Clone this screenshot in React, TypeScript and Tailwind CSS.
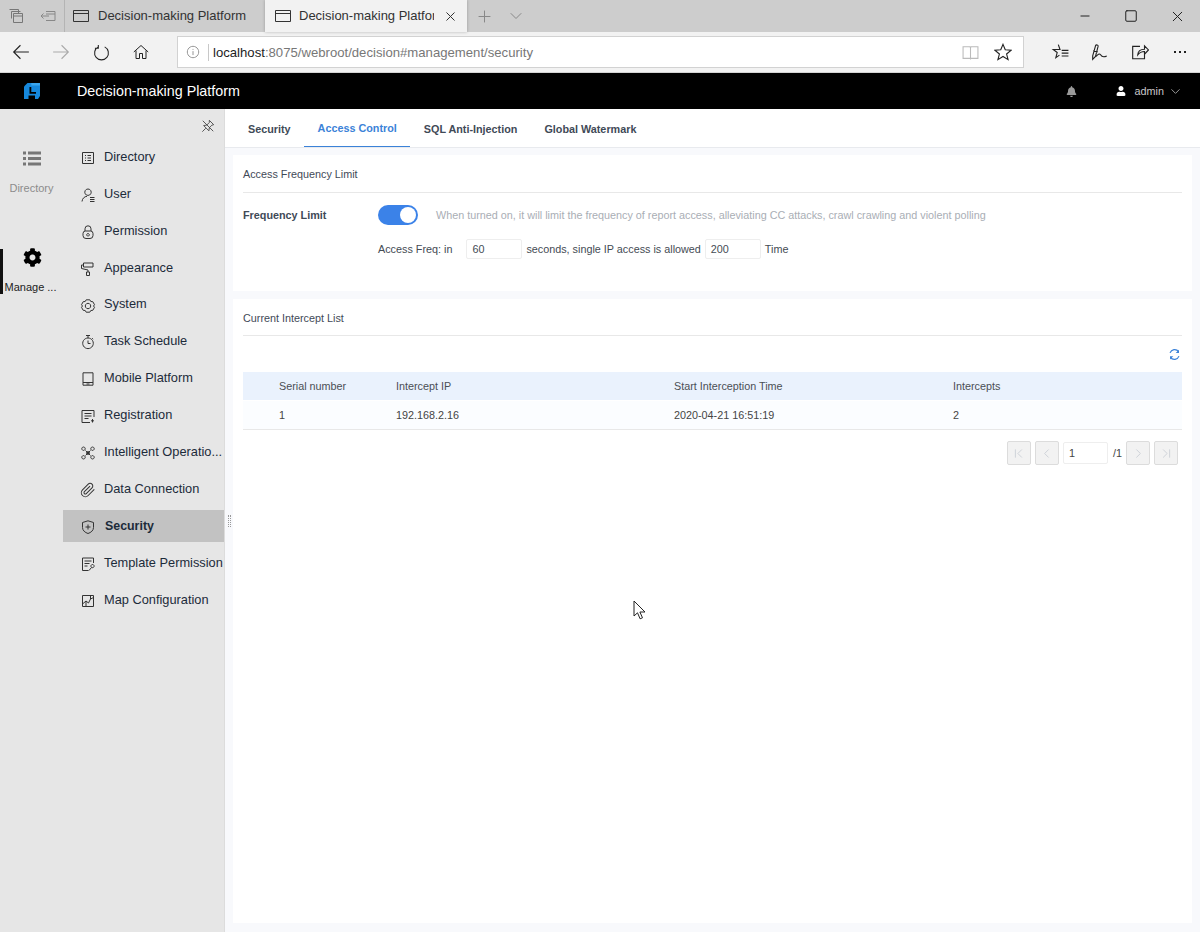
import React from 'react';
import { ChevronFirst, ChevronLast, ChevronLeft, ChevronRight, ChevronDown, Minus, Plus, Square, X } from 'lucide-react';
import { FaBell, FaCog, FaUser } from 'react-icons/fa';

// thin outline icon on a 16 box, used for everything the packages don't have
const Line = ({ size = 16, className = '', children }: { size?: number; className?: string; children: React.ReactNode }) => (
  <svg width={size} height={size} viewBox="0 0 16 16" fill="none" stroke="currentColor" strokeWidth="1" className={`shrink-0 ${className}`}>
    {children}
  </svg>
);

const menuItems: { label: string; icon: React.ReactNode; active?: boolean }[] = [
  {
    label: 'Directory',
    icon: <path d="M2.500 2.500h11v11h-11zM5 5.500h1M7.500 5.500H11M5 8h1M7.500 8H11M5 10.500h1M7.500 10.500H11" />,
  },
  {
    label: 'User',
    icon: <path d="M8 2a3.200 3.200 0 1 1-.01 0M2 14.500c.3-3 2.400-5 5-5.200M10 10.500h4.500M10 12.500h4.500M10 14.500h4.500" />,
  },
  {
    label: 'Permission',
    icon: <path d="M5 7V4.800a3 3 0 0 1 6 0V7M3 9.500A2.500 2.500 0 0 1 5.500 7h5A2.500 2.500 0 0 1 13 9.500v2A3 3 0 0 1 10 14.500H6a3 3 0 0 1-3-3zM8 9.500a1.300 1.300 0 1 0 .01 0" />,
  },
  {
    label: 'Appearance',
    icon: <path d="M3.500 2h9.500v4H3.500zM3.500 4H1.500v3.500l6.500 1.500v2M6.500 11h3v3.500h-3z" />,
  },
  {
    label: 'System',
    icon: <path d="M6.200 1.800h3.600l1 1.700 2 .2 1.700 3-1 1.300 1 1.300-1.700 3-2 .2-1 1.700H6.200l-1-1.700-2-.2L1.500 9.300l1-1.300-1-1.300 1.700-3 2-.2zM8 5.300a2.700 2.700 0 1 0 .01 0" />,
  },
  {
    label: 'Task Schedule',
    icon: <path d="M8 4a5.300 5.300 0 1 0 .01 0M6 1.500h4M8 1.500V4M8 6.500v3h2.500M12.200 4.200l1 1" />,
  },
  {
    label: 'Mobile Platform',
    icon: <path d="M3 1.800h10v12.400H3zM3 11.500h10M6.500 13h3" />,
  },
  {
    label: 'Registration',
    icon: <path d="M14 9V2.500H2v12h8M4.500 5.500h7M4.500 8h7M4.500 10.500h4M12.500 11v3.500M11 12.800h3" />,
  },
  {
    label: 'Intelligent Operatio...',
    icon: <path d="M5.500 5.500l5 5M10.500 5.500l-5 5M3.500 2a1.700 1.700 0 1 0 .01 0M12.500 2a1.700 1.700 0 1 0 .01 0M3.500 10.600a1.700 1.700 0 1 0 .01 0M12.500 10.600a1.700 1.700 0 1 0 .01 0M8 6.500a1.500 1.500 0 1 0 .01 0" />,
  },
  {
    label: 'Data Connection',
    icon: (
      <g transform="scale(0.667)">
        <path strokeWidth="1.500" d="M21.440 11.050l-9.190 9.190a6 6 0 0 1-8.490-8.490l8.570-8.570A4 4 0 1 1 18 8.840l-8.590 8.570a2 2 0 0 1-2.830-2.830l8.490-8.480" />
      </g>
    ),
  },
  {
    label: 'Security',
    icon: <path d="M8 1.800l5.500 1.700v5c0 3-2.500 5-5.500 6-3-1-5.500-3-5.500-6v-5zM8 5.500v5M5.500 8h5" />,
    active: true,
  },
  {
    label: 'Template Permission',
    icon: <path d="M13.500 7V2H2.500v12.500h6M4.500 5h7M4.500 7.500h5M4.500 10h3M12.500 8.500a1.600 1.600 0 1 0 .01 0M11.500 11.500l-2.500 3" />,
  },
  {
    label: 'Map Configuration',
    icon: <path d="M2.500 2.500h11v11h-11zM2.500 11L6 8l2.500 2 2-4 3-1.500M6 13.500V8M10.500 6V2.500" />,
  },
];

const tabs = ['Security', 'Access Control', 'SQL Anti-Injection', 'Global Watermark'];

const BrowserChrome = () => (
  <div className="shrink-0">
    {/* tab strip */}
    <div className="h-8 bg-[#cdcdcd] flex items-stretch text-[#333] text-[13px]">
      <div className="w-[65px] flex items-center text-[#777] border-r border-[#b4b4b4]">
        <div className="w-[32px] flex justify-center">
          <Line><path d="M1.500 1.500h9v4M3.500 3.500v7M5.500 5.500h9v9h-9zM5.500 8h9M3.500 3.500h9" /></Line>
        </div>
        <div className="w-[32px] flex justify-center">
          <Line className="text-[#888]"><path d="M6 3.500h9v9H6M6 6h9M1 8h8M3.500 5.500L1 8l2.500 2.500" /></Line>
        </div>
      </div>
      <div className="w-[200px] flex items-center pl-[8px] gap-[9px]">
        <Line><path d="M.5 2.500h15v11H.5zM.5 5.500h15" /></Line>
        <span className="whitespace-nowrap">Decision-making Platform</span>
      </div>
      <div className="w-[202px] bg-[#f2f2f2] flex items-center pl-[10px] shadow-[0_0_3px_rgba(0,0,0,0.25)]">
        <Line><path d="M.5 2.500h15v11H.5zM.5 5.500h15" /></Line>
        <span className="ml-[8px] w-[135px] overflow-hidden whitespace-nowrap">Decision-making Platform</span>
        <X size={15} strokeWidth={1} absoluteStrokeWidth className="ml-[9px]" />
      </div>
      <div className="w-[34px] flex items-center justify-center">
        <Plus size={19} strokeWidth={1} absoluteStrokeWidth className="text-[#888]" />
      </div>
      <div className="w-[30px] flex items-center justify-center">
        <ChevronDown size={20} strokeWidth={1} absoluteStrokeWidth className="text-[#888]" />
      </div>
      <div className="ml-auto flex items-center text-[#222]">
        <div className="w-[46px] flex justify-center"><Minus size={14} strokeWidth={1} absoluteStrokeWidth /></div>
        <div className="w-[46px] flex justify-center"><Square size={14} strokeWidth={1} absoluteStrokeWidth /></div>
        <div className="w-[46px] flex justify-center"><X size={17} strokeWidth={1} absoluteStrokeWidth /></div>
      </div>
    </div>
    {/* address bar */}
    <div className="h-[41px] bg-[#f2f2f2] flex items-center pl-[1px] border-b border-[#d4d4d4] text-[#222]">
      <div className="w-[40px] flex justify-center"><Line size={18}><path d="M1.500 8h13.500M7.500 2L1.500 8l6 6" /></Line></div>
      <div className="w-[40px] flex justify-center text-[#aaa]"><Line size={18}><path d="M1 8h13.500M8.500 2l6 6-6 6" /></Line></div>
      <div className="w-[40px] flex justify-center"><Line size={17}><path d="M11 2.700A6.500 6.500 0 1 1 5 2.700M5 1v3H1.800" /></Line></div>
      <div className="w-[40px] flex justify-center"><Line><path d="M.8 8L8 1.500 15.200 8M3 6.500v8h3.500v-5h3v5H13v-8" /></Line></div>
      <div className="ml-[16px] h-[32px] w-[847px] bg-white border border-[#d2d2d2] flex items-center pl-[8px]">
        <Line size={14} className="text-[#888]"><path d="M8 1.500a6.500 6.500 0 1 0 .01 0M8 7v4.500M8 4.500v1" /></Line>
        <div className="w-px h-[17px] bg-[#c8c8c8] ml-[8px] mr-[4px]" />
        <span className="text-[13.150px] text-[#777] mt-[2px]"><span className="text-[#222]">localhost</span>:8075/webroot/decision#management/security</span>
        <Line size={17} className="ml-auto text-[#bbb]"><path d="M1 2.500h6.500L8 3.500l.5-1H15v11H8.500L8 14l-.5-.5H1zM8 3.500v10" /></Line>
        <Line size={18} className="ml-[15px] mr-[11px]"><path d="M8 1.200l2 4.800 5.200.4-4 3.400 1.300 5L8 12l-4.500 2.800 1.300-5-4-3.400L6 6z" /></Line>
      </div>
      <div className="ml-[16px] w-[40px] flex justify-center"><Line size={18}><path d="M6.500 1.500L8 5.800l-.2 0H2L5.500 8.500 4.300 13l3.200-2.200M9.500 6.500h6M9.500 9h6M9.500 11.500h6" /></Line></div>
      <div className="w-[40px] flex justify-center"><Line size={18}><path d="M1.500 11.500L4 2.500c.6-1.500 2.600-.8 2.300.6L4 12l-2.500 2.500zM2 7l4 1M4.500 12c1.500-2 3-3 4-1.500.9 1.500 2.500 2.500 5.500 1" /></Line></div>
      <div className="w-[40px] flex justify-center"><Line size={18}><path d="M8 3H1.500v11H12V9M6 10.500c.2-3 2.400-5 6-5V2.500l3.500 3.700L12 10V7.500c-2.500 0-4.500 1-6 3z" /></Line></div>
      <div className="w-[40px] flex justify-center items-center gap-[3px] -mr-[2px]">
        <div className="w-[2px] h-[2px] bg-[#222]" />
        <div className="w-[2px] h-[2px] bg-[#222]" />
        <div className="w-[2px] h-[2px] bg-[#222]" />
      </div>
    </div>
  </div>
);

const AppHeader = () => (
  <div className="h-[36px] shrink-0 bg-black flex items-center text-white">
    <svg width="16" height="16" viewBox="0 0 16 16" className="ml-[24px]">
      <path d="M0 3.500L3.500 0H16v13l-2 3H0z" fill="#1688dc" />
      <path d="M5.500 4h1.800v5H12v1.800H5.500zM4.500 16v-3.500H11V16z" fill="#000" />
      <path d="M7.300 2.500H16V0H7.300z" fill="#3aa6ee" />
    </svg>
    <span className="ml-[37px] text-[14.300px] mt-[2px]">Decision-making Platform</span>
    <FaBell size={11} className="ml-auto text-[#9a9a9a]" />
    <FaUser size={10} className="ml-[39px] text-white" />
    <span className="ml-[9px] text-[10.800px] text-[#c8c8c8]">admin</span>
    <ChevronDown size={15} strokeWidth={1} absoluteStrokeWidth className="ml-[4px] mr-[17px] text-[#999]" />
  </div>
);

const Sidebar = () => (
  <div className="w-[225px] shrink-0 bg-[#e6e6e6] border-r border-[#dcdcdc] flex text-[12.800px] text-[#1c2b3a]">
    <div className="w-[63px] shrink-0 flex flex-col items-stretch pt-[42px]">
      <div className="flex flex-col items-center text-[#8c8c8c] text-[11px]">
        <svg width="18" height="15" viewBox="0 0 18 15" fill="#777">
          <rect x="0" y="0.500" width="3" height="3" />
          <rect x="5" y="0.500" width="13" height="3" />
          <rect x="0" y="6" width="3" height="3" />
          <rect x="5" y="6" width="13" height="3" />
          <rect x="0" y="11.500" width="3" height="3" />
          <rect x="5" y="11.500" width="13" height="3" />
        </svg>
        <span className="mt-[14px]">Directory</span>
      </div>
      <div className="mt-[52px] h-[45px] border-l-[3px] border-[#111] flex flex-col items-center text-[#222] text-[11px] pr-[5px]">
        <FaCog size={19} className="text-black shrink-0 -mt-[1px] ml-[4px]" />
        <span className="whitespace-nowrap mt-[12px]">Manage ...</span>
      </div>
    </div>
    <div className="flex-1 min-w-0 flex flex-col">
      <div className="h-[29px] flex justify-end items-center pr-[9px] pt-[5px]">
        <Line size={14} className="text-[#444]">
          <path d="M9.500 1.500l5 5-2 .5-3 3-.5 3.500-6-6 3.500-.5 3-3zM5.500 10.500L1.500 14.500M2 2l12 12" />
        </Line>
      </div>
      {menuItems.map(({ label, icon, active }) => (
        <div key={label} className="h-[36.900px] flex items-center">
          <div className={`h-[32px] w-full flex items-center pl-[17px] ${active ? 'bg-[#c2c2c2] font-bold mt-[2px]' : ''}`}>
            <Line className={`text-[#333] ${active ? 'mt-[1px]' : 'mt-[3px]'}`}>{icon}</Line>
            <span className={`${active ? 'ml-[9px] text-[12.400px]' : 'ml-[8px]'} whitespace-nowrap`}>{label}</span>
          </div>
        </div>
      ))}
    </div>
  </div>
);

const PageButton = ({ children }: { children: React.ReactNode }) => (
  <div className="w-[24px] h-[24px] bg-[#f2f2f2] border border-[#dcdcdc] rounded-[2px] flex items-center justify-center text-[#cfd3d9]">
    {children}
  </div>
);

const Content = () => (
  <div className="flex-1 min-w-0 flex flex-col bg-[#f8f9fc] text-[10.800px] text-[#3f4a57]">
    <div className="h-[39px] shrink-0 bg-white border-b border-[#e8eaee] flex items-stretch pl-[9.500px] font-bold">
      {tabs.map((tab, i) => (
        <div
          key={tab}
          className={`px-[13.500px] pt-[2px] flex items-center ${i === 1 ? 'text-[#3b82d8] border-b border-[#3b82d8]' : ''}`}
        >
          {tab}
        </div>
      ))}
    </div>
    <div className="flex-1 flex flex-col gap-[8px] pl-[8px] pr-[8px] pt-[7px] pb-[9px]">
      <div className="h-[136px] bg-white px-[10px]">
        <div className="h-[38px] pt-[2px] flex items-center border-b border-[#e8e8e8]">Access Frequency Limit</div>
        <div className="mt-[12px] flex items-center">
          <span className="w-[135px] font-bold">Frequency Limit</span>
          <div className="w-[40px] h-[20px] rounded-full bg-[#3b82e8] flex items-center justify-end pr-[2px]">
            <div className="w-[16px] h-[16px] rounded-full bg-white" />
          </div>
          <span className="ml-[18px] text-[#a9aeb5]">When turned on, it will limit the frequency of report access, alleviating CC attacks, crawl crawling and violent polling</span>
        </div>
        <div className="mt-[14px] ml-[135px] flex items-center text-[#444b54]">
          <span>Access Freq: in</span>
          <div className="ml-[14px] w-[56px] h-[20px] border border-[#eeeeee] rounded-[2px] pl-[5px] flex items-center">60</div>
          <span className="ml-[4px]">seconds, single IP access is allowed</span>
          <div className="ml-[4px] w-[56px] h-[20px] border border-[#eeeeee] rounded-[2px] pl-[5px] flex items-center">200</div>
          <span className="ml-[4px]">Time</span>
        </div>
      </div>
      <div className="flex-1 bg-white px-[10px]">
        <div className="h-[37px] pt-[2px] flex items-center border-b border-[#e8e8e8]">Current Intercept List</div>
        <div className="h-[36px] flex items-center justify-end pr-[1px]">
          <Line size={13} className="text-[#3b82d8]">
            <path d="M2.500 6A6 6 0 0 1 13 4.500M13.500 10A6 6 0 0 1 3 11.500" strokeWidth="1.500" />
            <path d="M13.500 2v4h-4zM2.500 14v-4h4z" fill="currentColor" stroke="none" />
          </Line>
        </div>
        <div className="h-[28px] bg-[#eaf2fd] text-[#4a4f55] grid grid-cols-[117px_278px_279px_1fr] items-center pl-[36px]">
          <span>Serial number</span>
          <span>Intercept IP</span>
          <span>Start Interception Time</span>
          <span>Intercepts</span>
        </div>
        <div className="h-[29px] mt-[1px] bg-[#fbfdff] text-[#444444] border-b border-[#e8e8e8] grid grid-cols-[117px_278px_279px_1fr] items-center pl-[36px]">
          <span>1</span>
          <span>192.168.2.16</span>
          <span>2020-04-21 16:51:19</span>
          <span>2</span>
        </div>
        <div className="mt-[11px] flex items-center justify-end pr-[4px] gap-[4px] text-[#444444]">
          <PageButton><ChevronFirst size={15} strokeWidth={1} absoluteStrokeWidth /></PageButton>
          <PageButton><ChevronLeft size={15} strokeWidth={1} absoluteStrokeWidth /></PageButton>
          <div className="w-[45px] h-[22px] border border-[#eeeeee] rounded-[2px] pl-[5px] flex items-center">1</div>
          <span className="ml-px">/1</span>
          <PageButton><ChevronRight size={15} strokeWidth={1} absoluteStrokeWidth /></PageButton>
          <PageButton><ChevronLast size={15} strokeWidth={1} absoluteStrokeWidth /></PageButton>
        </div>
      </div>
    </div>
  </div>
);

export default function App() {
  return (
    <div className="relative w-[1200px] h-[932px] overflow-hidden flex flex-col bg-white font-['Liberation_Sans',Arial,sans-serif]">
      <BrowserChrome />
      <AppHeader />
      <div className="flex-1 min-h-0 flex">
        <Sidebar />
        <Content />
      </div>
      {/* resize grip */}
      <div className="absolute left-[228px] top-[515px] w-[3px] h-[12px] border-x border-dotted border-[#999]" />
      {/* mouse cursor */}
      <svg width="14" height="20" viewBox="0 0 14 20" className="absolute left-[633px] top-[600px]">
        <path d="M1 1v15l3.500-3.200 2.600 6 2.400-1-2.600-5.800H12z" fill="#fff" stroke="#222" strokeWidth="1" />
      </svg>
    </div>
  );
}
